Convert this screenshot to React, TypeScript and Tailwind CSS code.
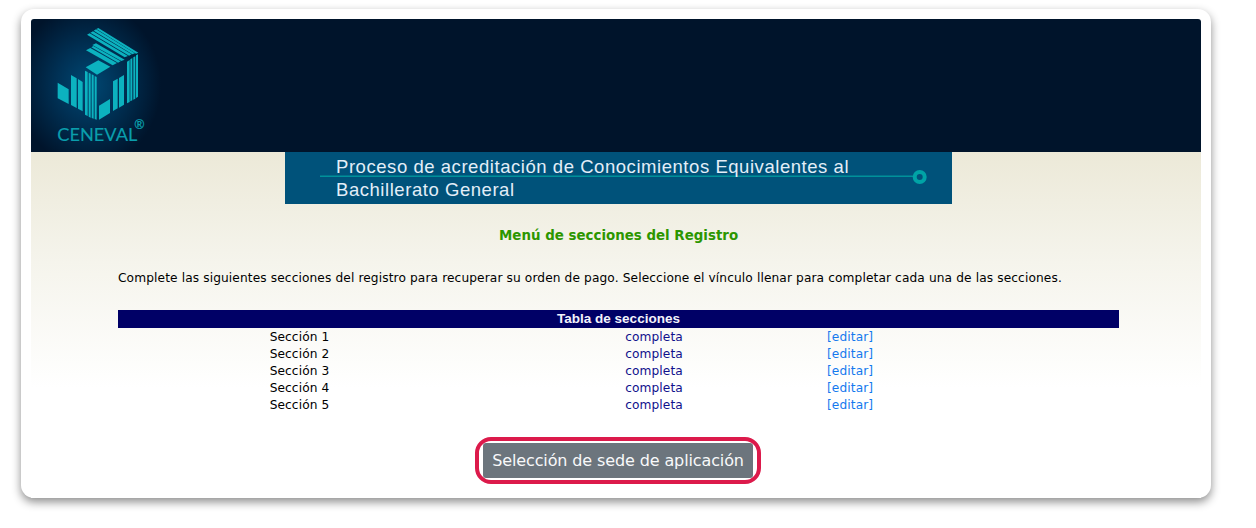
const sections = [1, 2, 3, 4, 5];

function Logo() {
  return (
    <svg viewBox="0 0 300 390" className="block h-[130px] w-[100px]" fill="#0cb2bf">
      <g>
        <path d="M111 44L119 40L234 108L224 112Z" />
        <path d="M121 38L129 34L245 103L237 107Z" />
        <path d="M131 32L138 28L255 100L247 103Z" />
        <path d="M139 27L145 24L265 98L258 101Z" />
        <path d="M108 91L121 84L201 129L188 136Z" />
        <path d="M124 82L130 78L212 124L204 128Z" />
        <path d="M127 75L138 70L224 119L214 123Z" />
        <path d="M107 142L145 121L181 140L141 164Z" />
        <path d="M23 188L56 208V252L23 235Z" />
        <path d="M63 165L80 175V264L63 255Z" />
        <path d="M84 177L98 186V274L84 266Z" />
        <path d="M105 152L113 156V288L105 284Z" />
        <path d="M116 158L122 161V293L116 290Z" />
        <path d="M125 163L131 166V296L125 294Z" />
        <path d="M134 168L140 171V299L134 297Z" />
        <path d="M147 257L180 237V279L147 299Z" />
        <path d="M189 184L203 176V265L189 273Z" />
        <path d="M207 174L222 165V254L207 263Z" />
        <path d="M231 125L239 120V246L231 250Z" />
        <path d="M241 118L247 114V241L241 244Z" />
        <path d="M250 112L256 109V236L250 239Z" />
        <path d="M258 106L264 103V230L258 234Z" />
      </g>
      <text x="22" y="362" fontSize="54" textLength="240" lengthAdjust="spacingAndGlyphs" fill="#0a9eac" stroke="#0a9eac" strokeWidth="0.5" fontFamily="Lato, sans-serif">
        CENEVAL
      </text>
      <text x="253" y="328" fontSize="38" textLength="31" lengthAdjust="spacingAndGlyphs" fill="#0a9eac" stroke="#0a9eac" strokeWidth="0.8" fontFamily="Lato, sans-serif">
        ®
      </text>
    </svg>
  );
}

export default function App() {
  return (
    <div className="h-[528px] w-[1256px] overflow-hidden bg-white pt-[9px] pl-[21px] font-['DejaVu_Sans',sans-serif] text-black">
      <div className="h-[489px] w-[1190px] rounded-[13px] bg-white px-[10px] pt-[10px] shadow-[0_4px_10px_rgba(0,0,0,0.45)]">
        <header className="h-[133px] rounded-t-[3px] bg-[#00142b] bg-[radial-gradient(ellipse_72px_82px_at_58px_66px,#004873_0%,#003155_45%,#00142b_100%)] pl-[19px] pt-px">
          <Logo />
        </header>
        <main className="flex h-[346px] flex-col bg-[linear-gradient(#ece9d8_0px,#f5f4ec_110px,#ffffff_236px)]">
          <div className="relative ml-[254px] h-[52px] w-[667px] shrink-0 bg-[#00527a] pl-[51px] pt-[3px] font-['Liberation_Sans',sans-serif] text-[18.5px] leading-[23px] tracking-[0.55px] text-[#e3eef8]">
            <svg className="absolute left-0 top-0 h-[52px] w-[667px]" viewBox="0 0 667 52" fill="none">
              <path d="M35 24.3H628" stroke="#00919a" strokeWidth="1.4" />
              <circle cx="634.7" cy="25" r="5" stroke="#00a3a6" strokeWidth="4" />
            </svg>
            <p className="relative whitespace-nowrap">Proceso de acreditación de Conocimientos Equivalentes al</p>
            <p className="relative whitespace-nowrap">Bachillerato General</p>
          </div>
          <h1 className="ml-[468px] mt-[22px] h-[20px] shrink-0 whitespace-nowrap text-[13.4px] font-bold leading-[19px] text-[#2c9600]">
            Menú de secciones del Registro
          </h1>
          <p className="ml-[87px] mt-[22px] h-[20px] shrink-0 whitespace-nowrap text-[12.2px] leading-[20px] tracking-[0.115px]">
            Complete las siguientes secciones del registro para recuperar su orden de pago. Seleccione el vínculo llenar para completar cada una de las secciones.
          </p>
          <section className="ml-[87px] mt-[22px] w-[1001px] text-[12.2px] tracking-[0.1px]">
            <h2 className="h-[18px] bg-[#000066] text-center font-['Liberation_Sans',sans-serif] text-[13.5px] font-bold leading-[18px] tracking-normal text-[#f3f3fb]">
              Tabla de secciones
            </h2>
            <div className="pt-px">
              {sections.map((n) => (
                <div key={n} className="grid h-[17px] grid-cols-[363px_346px_292px] leading-[17px]">
                  <span className="text-center">Sección {n}</span>
                  <span className="text-center text-[#10108c]">completa</span>
                  <a className="text-[#1479ee]">[editar]</a>
                </div>
              ))}
            </div>
          </section>
          <div className="ml-[444px] mt-[23px] flex h-[47px] w-[286px] shrink-0 items-center justify-center rounded-[16px] border-4 border-[#dc1a4b]">
            <button className="h-[35px] w-[270px] whitespace-nowrap rounded-[3px] bg-[#6c757d] text-[16px] tracking-[-0.12px] text-[#f8f9fa]">
              Selección de sede de aplicación
            </button>
          </div>
        </main>
      </div>
    </div>
  );
}
